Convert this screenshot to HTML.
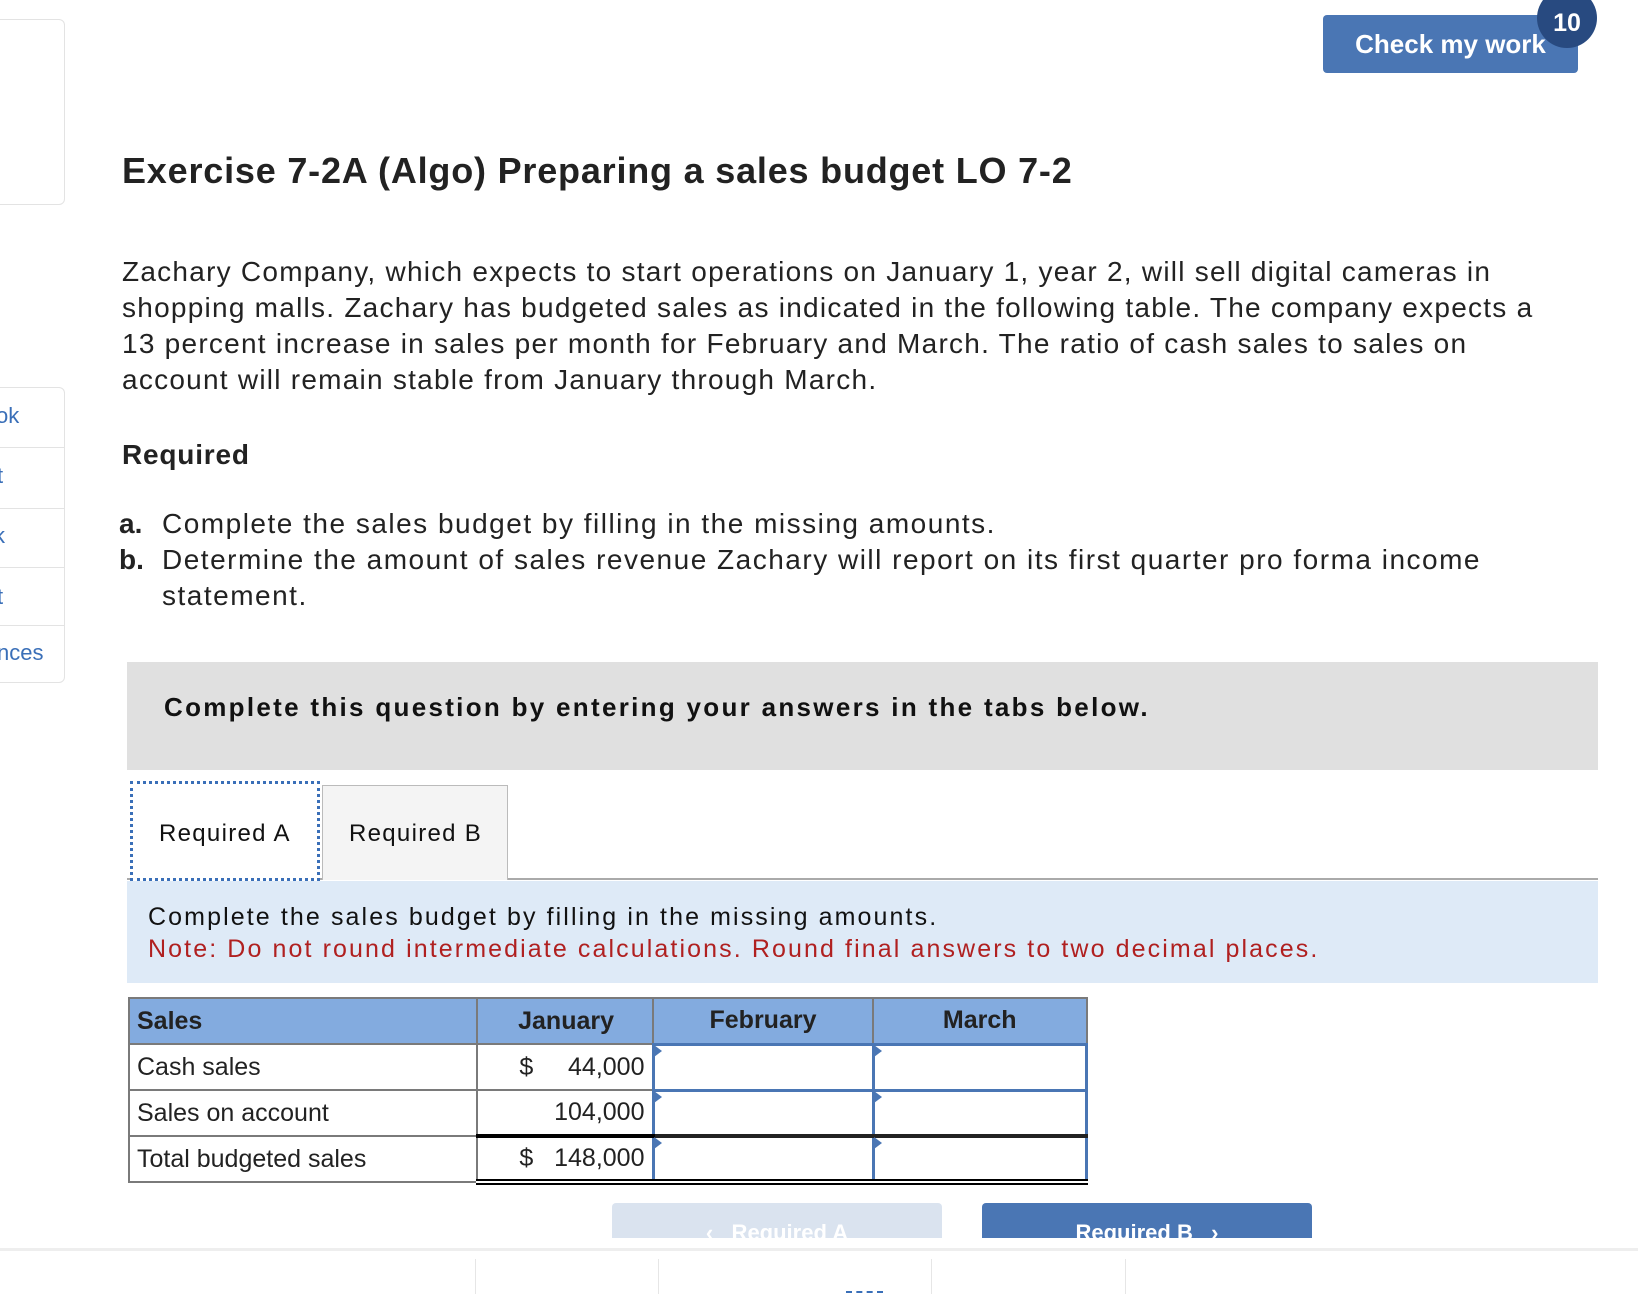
<!DOCTYPE html>
<html><head><meta charset="utf-8"><style>
*{margin:0;padding:0;box-sizing:border-box}
body{width:1638px;height:1294px;overflow:hidden;background:#fff;font-family:"Liberation Sans",sans-serif;color:#222;position:relative}
.a{position:absolute;white-space:nowrap}
.btn{left:1323px;top:15px;width:255px;height:58px;background:#4a76b4;border-radius:4px;color:#fff;font-weight:bold;font-size:26px;line-height:58px;text-align:center}
.badge{left:1537px;top:-12px;width:60px;height:60px;border-radius:50%;background:#284a80;color:#fff;font-weight:bold;font-size:25px;text-align:center;line-height:70px}
.card{border:1px solid #e3e3e3;border-left:none;border-radius:0 6px 6px 0;background:#fff}
.side{font-size:22px;color:#3a6fb8}
p.t{font-size:28px;line-height:36px;letter-spacing:1.25px}
table{border-collapse:collapse;font-size:25px}
td{border:2px solid #7a7a7a;height:46px;padding:0 7px}
td.in{border:3px solid #4a76b4;position:relative}
td.in::before{content:"";position:absolute;left:-1px;top:-1px;border-left:8px solid #4a76b4;border-top:6px solid transparent;border-bottom:6px solid transparent}
</style></head><body>
<div class="a card" style="left:0;top:19px;width:65px;height:186px"></div>
<div class="a card" style="left:0;top:387px;width:65px;height:296px"></div>
<div class="a" style="left:0;top:447px;width:65px;border-top:1px solid #e3e3e3"></div>
<div class="a" style="left:0;top:508px;width:65px;border-top:1px solid #e3e3e3"></div>
<div class="a" style="left:0;top:567px;width:65px;border-top:1px solid #e3e3e3"></div>
<div class="a" style="left:0;top:625px;width:65px;border-top:1px solid #e3e3e3"></div>
<div class="a side" style="left:-4px;top:403px">ok</div>
<div class="a side" style="left:-3px;top:463px">t</div>
<div class="a side" style="left:-6px;top:523px">k</div>
<div class="a side" style="left:-3px;top:584px">t</div>
<div class="a side" style="left:-3px;top:640px">nces</div>

<div class="a btn">Check my work</div>
<div class="a badge">10</div>

<div class="a" style="left:122px;top:150px;font-size:36px;font-weight:bold;color:#222;letter-spacing:0.8px">Exercise 7-2A (Algo) Preparing a sales budget LO 7-2</div>
<div class="a" style="left:122px;top:254px"><p class="t">Zachary Company, which expects to start operations on January 1, year 2, will sell digital cameras in<br>shopping malls. Zachary has budgeted sales as indicated in the following table. The company expects a<br>13 percent increase in sales per month for February and March. The ratio of cash sales to sales on<br>account will remain stable from January through March.</p></div>
<div class="a" style="left:122px;top:439px;font-size:28px;font-weight:bold;letter-spacing:0.8px">Required</div>
<div class="a" style="left:119px;top:506px;font-size:28px;line-height:36px"><b>a.</b></div>
<div class="a" style="left:162px;top:506px;font-size:28px;line-height:36px;letter-spacing:1.5px">Complete the sales budget by filling in the missing amounts.</div>
<div class="a" style="left:119px;top:542px;font-size:28px;line-height:36px"><b>b.</b></div>
<div class="a" style="left:162px;top:542px;font-size:28px;line-height:36px;letter-spacing:1.5px">Determine the amount of sales revenue Zachary will report on its first quarter pro forma income<br>statement.</div>

<div class="a" style="left:127px;top:662px;width:1471px;height:108px;background:#e0e0e0"></div>
<div class="a" style="left:164px;top:692px;font-size:26px;font-weight:bold;color:#111;letter-spacing:2.3px">Complete this question by entering your answers in the tabs below.</div>

<div class="a" style="left:127px;top:878px;width:1471px;border-top:2px solid #aaa"></div>
<div class="a" style="left:322px;top:785px;width:186px;height:95px;background:#f4f4f4;border:1px solid #bbb;border-bottom:none"></div>
<div class="a" style="left:130px;top:781px;width:190px;height:100px;background:#fff;border:3px dotted #3a6fb8"></div>
<div class="a" style="left:159px;top:820px;font-size:24px;color:#111;letter-spacing:1.3px">Required A</div>
<div class="a" style="left:349px;top:820px;font-size:24px;color:#111;letter-spacing:1.3px">Required B</div>

<div class="a" style="left:127px;top:881px;width:1471px;height:102px;background:#deeaf7"></div>
<div class="a" style="left:148px;top:903px;font-size:25px;color:#111;letter-spacing:2.1px">Complete the sales budget by filling in the missing amounts.</div>
<div class="a" style="left:148px;top:935px;font-size:25px;color:#b02020;letter-spacing:2.1px">Note: Do not round intermediate calculations. Round final answers to two decimal places.</div>

<table class="a" style="left:128px;top:997px;width:960px">
<tr style="background:#83abdf;font-weight:bold"><td style="width:348px">Sales</td><td style="width:176px;text-align:right;padding-right:38px">January</td><td style="width:220px;text-align:center">February</td><td style="text-align:center">March</td></tr>
<tr><td>Cash sales</td><td style="text-align:right">$&nbsp;&nbsp;&nbsp;&nbsp;&nbsp;44,000</td><td class="in"></td><td class="in"></td></tr>
<tr><td>Sales on account</td><td style="text-align:right;border-bottom:4px solid #000">104,000</td><td class="in" style="border-bottom:4px solid #222"></td><td class="in" style="border-bottom:4px solid #222"></td></tr>
<tr><td>Total budgeted sales</td><td style="text-align:right;border-bottom:6px double #000">$&nbsp;&nbsp;&nbsp;148,000</td><td class="in" style="border-bottom:6px double #000"></td><td class="in" style="border-bottom:6px double #000"></td></tr>
</table>

<div class="a" style="left:612px;top:1203px;width:330px;height:36px;background:#dae3ef;border-radius:4px 4px 0 0;overflow:hidden;color:#fff;font-weight:bold;font-size:22px;text-align:center;line-height:60px">&lsaquo;&nbsp;&nbsp;&nbsp;Required A</div>
<div class="a" style="left:982px;top:1203px;width:330px;height:36px;background:#4a76b4;border-radius:4px 4px 0 0;overflow:hidden;color:#fff;font-weight:bold;font-size:22px;text-align:center;line-height:60px">Required B&nbsp;&nbsp;&nbsp;&rsaquo;</div>
<div class="a" style="left:0;top:1238px;width:1638px;height:11px;background:#fff"></div>
<div class="a" style="left:0;top:1248px;width:1638px;border-top:3px solid #eee"></div>
<div class="a" style="left:475px;top:1259px;height:35px;border-left:1px solid #e6e6e6"></div>
<div class="a" style="left:658px;top:1259px;height:35px;border-left:1px solid #e6e6e6"></div>
<div class="a" style="left:931px;top:1259px;height:35px;border-left:1px solid #e6e6e6"></div>
<div class="a" style="left:1125px;top:1259px;height:35px;border-left:1px solid #e6e6e6"></div>
<div class="a" style="left:846px;top:1291px;width:37px;border-top:2px dashed #3a6fb8"></div>
</body></html>
